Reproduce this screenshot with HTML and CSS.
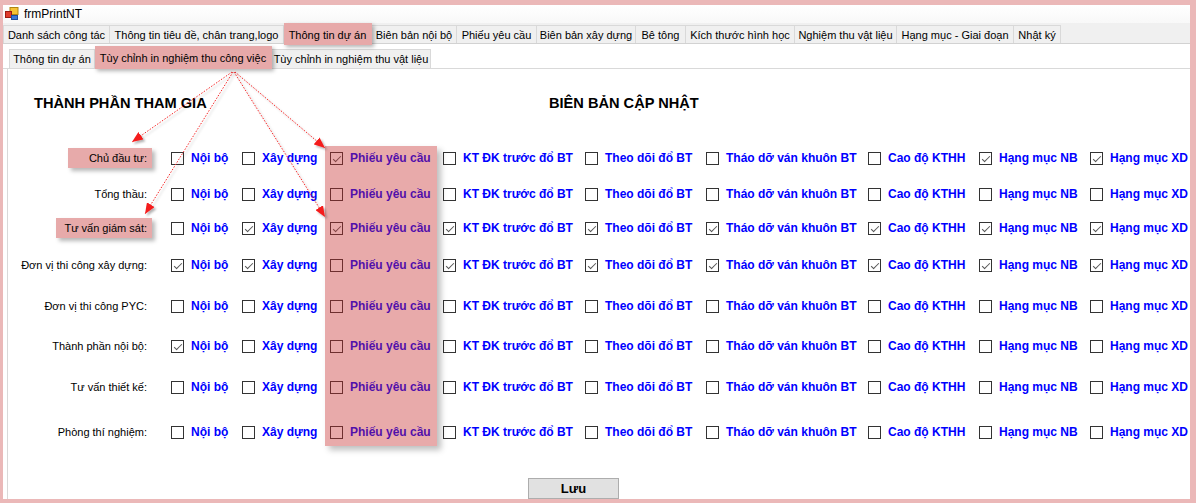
FILE: index.html
```html
<!DOCTYPE html>
<html lang="vi">
<head>
  <meta charset="UTF-8">
  <title>frmPrintNT</title>
  <link rel="stylesheet" href="styles.css">
</head>
<body>
  <div class="window">
    <div class="titlebar">
      <svg class="app-icon" viewBox="0 0 14 14">
        <rect x="5" y="0.5" width="8" height="7" fill="#f6c233" stroke="#b08410"/>
        <rect x="0.5" y="4.5" width="6" height="6" fill="#e03a2a" stroke="#9a1a10"/>
        <rect x="6.5" y="8.5" width="6" height="4" fill="#3a78d8" stroke="#1d4c9a"/>
      </svg>
      <span>frmPrintNT</span>
    </div>

    <div class="main-tabs">
      <div class="tab" style="width:107px">Danh sách công tác</div>
      <div class="tab" style="width:174px">Thông tin tiêu đề, chân trang,logo</div>
      <div class="tab hl" style="width:88px">Thông tin dự án</div>
      <div class="tab" style="width:85px">Biên bản nội bộ</div>
      <div class="tab" style="width:80px">Phiếu yêu cầu</div>
      <div class="tab" style="width:99px">Biên bản xây dựng</div>
      <div class="tab" style="width:50px">Bê tông</div>
      <div class="tab" style="width:109px">Kích thước hình học</div>
      <div class="tab" style="width:102px">Nghiệm thu vật liệu</div>
      <div class="tab" style="width:117px">Hạng mục - Giai đoạn</div>
      <div class="tab" style="width:47px">Nhật ký</div>
    </div>

    <div class="sub-tabs">
      <div class="tab" style="width:86px">Thông tin dự án</div>
      <div class="tab hl" style="width:177px">Tùy chỉnh in nghiệm thu công việc</div>
      <div class="tab" style="width:159px">Tùy chỉnh in nghiệm thu vật liệu</div>
    </div>

    <div class="page">
      <div class="heads">
        <h2>THÀNH PHẦN THAM GIA</h2>
        <h2>BIÊN BẢN CẬP NHẬT</h2>
      </div>

      <div class="matrix">
        <div class="row">
          <div class="who"><span class="mark">Chủ đầu tư:</span></div>
          <label class="opt"><span class="box"></span>Nội bộ</label>
          <label class="opt"><span class="box"></span>Xây dựng</label>
          <label class="opt"><span class="box on"></span>Phiếu yêu cầu</label>
          <label class="opt"><span class="box"></span>KT ĐK trước đổ BT</label>
          <label class="opt"><span class="box"></span>Theo dõi đổ BT</label>
          <label class="opt"><span class="box"></span>Tháo dỡ ván khuôn BT</label>
          <label class="opt"><span class="box"></span>Cao độ KTHH</label>
          <label class="opt"><span class="box on"></span>Hạng mục NB</label>
          <label class="opt"><span class="box on"></span>Hạng mục XD</label>
        </div>
        <div class="row">
          <div class="who">Tổng thầu:</div>
          <label class="opt"><span class="box"></span>Nội bộ</label>
          <label class="opt"><span class="box"></span>Xây dựng</label>
          <label class="opt"><span class="box"></span>Phiếu yêu cầu</label>
          <label class="opt"><span class="box"></span>KT ĐK trước đổ BT</label>
          <label class="opt"><span class="box"></span>Theo dõi đổ BT</label>
          <label class="opt"><span class="box"></span>Tháo dỡ ván khuôn BT</label>
          <label class="opt"><span class="box"></span>Cao độ KTHH</label>
          <label class="opt"><span class="box"></span>Hạng mục NB</label>
          <label class="opt"><span class="box"></span>Hạng mục XD</label>
        </div>
        <div class="row">
          <div class="who"><span class="mark short">Tư vấn giám sát:</span></div>
          <label class="opt"><span class="box"></span>Nội bộ</label>
          <label class="opt"><span class="box on"></span>Xây dựng</label>
          <label class="opt"><span class="box on"></span>Phiếu yêu cầu</label>
          <label class="opt"><span class="box on"></span>KT ĐK trước đổ BT</label>
          <label class="opt"><span class="box on"></span>Theo dõi đổ BT</label>
          <label class="opt"><span class="box on"></span>Tháo dỡ ván khuôn BT</label>
          <label class="opt"><span class="box on"></span>Cao độ KTHH</label>
          <label class="opt"><span class="box on"></span>Hạng mục NB</label>
          <label class="opt"><span class="box on"></span>Hạng mục XD</label>
        </div>
        <div class="row">
          <div class="who">Đơn vị thi công xây dựng:</div>
          <label class="opt"><span class="box on"></span>Nội bộ</label>
          <label class="opt"><span class="box on"></span>Xây dựng</label>
          <label class="opt"><span class="box"></span>Phiếu yêu cầu</label>
          <label class="opt"><span class="box on"></span>KT ĐK trước đổ BT</label>
          <label class="opt"><span class="box on"></span>Theo dõi đổ BT</label>
          <label class="opt"><span class="box on"></span>Tháo dỡ ván khuôn BT</label>
          <label class="opt"><span class="box on"></span>Cao độ KTHH</label>
          <label class="opt"><span class="box on"></span>Hạng mục NB</label>
          <label class="opt"><span class="box on"></span>Hạng mục XD</label>
        </div>
        <div class="row">
          <div class="who">Đơn vị thi công PYC:</div>
          <label class="opt"><span class="box"></span>Nội bộ</label>
          <label class="opt"><span class="box"></span>Xây dựng</label>
          <label class="opt"><span class="box"></span>Phiếu yêu cầu</label>
          <label class="opt"><span class="box"></span>KT ĐK trước đổ BT</label>
          <label class="opt"><span class="box"></span>Theo dõi đổ BT</label>
          <label class="opt"><span class="box"></span>Tháo dỡ ván khuôn BT</label>
          <label class="opt"><span class="box"></span>Cao độ KTHH</label>
          <label class="opt"><span class="box"></span>Hạng mục NB</label>
          <label class="opt"><span class="box"></span>Hạng mục XD</label>
        </div>
        <div class="row">
          <div class="who">Thành phần nội bộ:</div>
          <label class="opt"><span class="box on"></span>Nội bộ</label>
          <label class="opt"><span class="box"></span>Xây dựng</label>
          <label class="opt"><span class="box"></span>Phiếu yêu cầu</label>
          <label class="opt"><span class="box"></span>KT ĐK trước đổ BT</label>
          <label class="opt"><span class="box"></span>Theo dõi đổ BT</label>
          <label class="opt"><span class="box"></span>Tháo dỡ ván khuôn BT</label>
          <label class="opt"><span class="box"></span>Cao độ KTHH</label>
          <label class="opt"><span class="box"></span>Hạng mục NB</label>
          <label class="opt"><span class="box"></span>Hạng mục XD</label>
        </div>
        <div class="row">
          <div class="who">Tư vấn thiết kế:</div>
          <label class="opt"><span class="box"></span>Nội bộ</label>
          <label class="opt"><span class="box"></span>Xây dựng</label>
          <label class="opt"><span class="box"></span>Phiếu yêu cầu</label>
          <label class="opt"><span class="box"></span>KT ĐK trước đổ BT</label>
          <label class="opt"><span class="box"></span>Theo dõi đổ BT</label>
          <label class="opt"><span class="box"></span>Tháo dỡ ván khuôn BT</label>
          <label class="opt"><span class="box"></span>Cao độ KTHH</label>
          <label class="opt"><span class="box"></span>Hạng mục NB</label>
          <label class="opt"><span class="box"></span>Hạng mục XD</label>
        </div>
        <div class="row">
          <div class="who">Phòng thí nghiệm:</div>
          <label class="opt"><span class="box"></span>Nội bộ</label>
          <label class="opt"><span class="box"></span>Xây dựng</label>
          <label class="opt"><span class="box"></span>Phiếu yêu cầu</label>
          <label class="opt"><span class="box"></span>KT ĐK trước đổ BT</label>
          <label class="opt"><span class="box"></span>Theo dõi đổ BT</label>
          <label class="opt"><span class="box"></span>Tháo dỡ ván khuôn BT</label>
          <label class="opt"><span class="box"></span>Cao độ KTHH</label>
          <label class="opt"><span class="box"></span>Hạng mục NB</label>
          <label class="opt"><span class="box"></span>Hạng mục XD</label>
        </div>

        <div class="col-mark"></div>
      </div>

      <div class="actions">
        <button>Lưu</button>
      </div>
    </div>
  </div>

  <!-- annotation arrows -->
  <svg class="arrows" width="1196" height="503" viewBox="0 0 1196 503">
    <defs>
      <marker id="head" markerWidth="11" markerHeight="9" refX="11" refY="4.5" orient="auto" markerUnits="userSpaceOnUse">
        <path d="M0,0 L11,4.5 L0,9 z" fill="#f41c1c"/>
      </marker>
      <filter id="shadow" x="-10%" y="-10%" width="130%" height="130%">
        <feDropShadow dx="2" dy="2" stdDeviation="1" flood-color="#000" flood-opacity="0.3"/>
      </filter>
    </defs>
    <g stroke="#f42a2a" stroke-width="1" stroke-dasharray="1.5 1.5" fill="none" marker-end="url(#head)" filter="url(#shadow)">
      <line x1="232" y1="72" x2="132" y2="142"/>
      <line x1="233" y1="72" x2="145" y2="214"/>
      <line x1="235" y1="72" x2="325" y2="148"/>
      <line x1="234" y1="72" x2="325" y2="217"/>
    </g>
  </svg>
</body>
</html>
```

FILE: styles.css
```css
* {
  box-sizing: border-box;
}

body {
  margin: 0;
  font-family: "Liberation Sans", Arial, sans-serif;
  font-size: 12px;
  color: #000;
  background: #fff;
  position: relative;
}

.window {
  position: relative;
  width: 1196px;
  height: 503px;
  border-style: solid;
  border-color: #ebb8b8;
  border-width: 5px 6px 4px 3px;
  background: #fff;
  overflow: hidden;
}

.titlebar {
  height: 18px;
  display: flex;
  align-items: center;
  gap: 5px;
  padding-left: 2px;
  background: linear-gradient(#fff, #f8f8f8);
}

.app-icon {
  width: 14px;
  height: 14px;
}

/* tab strips */
.main-tabs {
  display: flex;
  align-items: flex-end;
  height: 21px;
  background: #f0f0f0;
  border-bottom: 1px solid #d2d2d2;
}

.tab {
  height: 18px;
  display: flex;
  align-items: center;
  justify-content: center;
  white-space: nowrap;
  font-size: 11px;
  background: #f0f0f0;
  border: 1px solid #d9d9d9;
  border-bottom: none;
  border-left: none;
}

.main-tabs .tab:first-child,
.sub-tabs .tab:first-child {
  border-left: 1px solid #d9d9d9;
}

.tab.hl {
  position: relative;
  z-index: 1;
  height: 22px;
  margin-bottom: -2px;
  background: #e7a9a9;
  border-color: #e7a9a9;
  box-shadow: 2px 2px 4px rgba(0, 0, 0, 0.3);
}

.sub-tabs {
  display: flex;
  align-items: flex-end;
  height: 25px;
  padding-left: 6px;
  border-bottom: 1px solid #d9d9d9;
}

.sub-tabs .tab {
  height: 19px;
}

.sub-tabs .tab.hl {
  height: 23px;
  margin-bottom: -1px;
}

/* page */
.page {
  margin-left: 4px;
  height: 430px;
  border-left: 1px solid #d9d9d9;
}

.heads {
  display: grid;
  grid-template-columns: 515px auto;
  padding: 26px 0 0 26px;
}

.heads h2 {
  margin: 0;
  font-size: 14.6px;
  line-height: 16px;
  font-weight: bold;
}

.matrix {
  position: relative;
  margin-top: 36px;
  display: grid;
  grid-template-rows: 36px 34px 37px 41px 40px 41px 45px 22px;
}

.row {
  display: grid;
  grid-template-columns: 163px 71px 88px 113px 142px 121px 162px 111px 111px auto;
  align-items: center;
  height: 22px;
}

.who {
  text-align: right;
  padding-right: 24px;
  font-size: 11px;
  white-space: nowrap;
}

.mark {
  padding: 4px 5px 4px 21px;
  margin-right: -5px;
  background: #e7aaaa;
  box-shadow: 3px 3px 4px rgba(0, 0, 0, 0.28);
}

.mark.short {
  padding-left: 8px;
}

.opt {
  display: flex;
  align-items: center;
  gap: 7px;
  font-weight: bold;
  color: #0000ff;
  white-space: nowrap;
}

.box {
  position: relative;
  flex: none;
  width: 13px;
  height: 13px;
  border: 1px solid #333;
  background: #fff;
}

.box.on::after {
  content: "";
  position: absolute;
  left: 4px;
  top: 1px;
  width: 3px;
  height: 7px;
  border: solid #555;
  border-width: 0 1px 1px 0;
  transform: rotate(45deg);
}

.col-mark {
  position: absolute;
  left: 317px;
  top: -1px;
  width: 112px;
  height: 300px;
  background: rgba(198, 42, 42, 0.4);
  box-shadow: 4px 4px 6px rgba(0, 0, 0, 0.25);
  pointer-events: none;
}

.actions {
  margin-top: 35px;
  padding-left: 520px;
}

.actions button {
  width: 91px;
  height: 21px;
  padding: 0;
  background: #e1e1e1;
  border: 1px solid #adadad;
  font-family: "Liberation Sans", Arial, sans-serif;
  font-size: 13px;
  font-weight: bold;
  color: #000;
}

.arrows {
  position: absolute;
  top: 0;
  left: 0;
  pointer-events: none;
}
```
